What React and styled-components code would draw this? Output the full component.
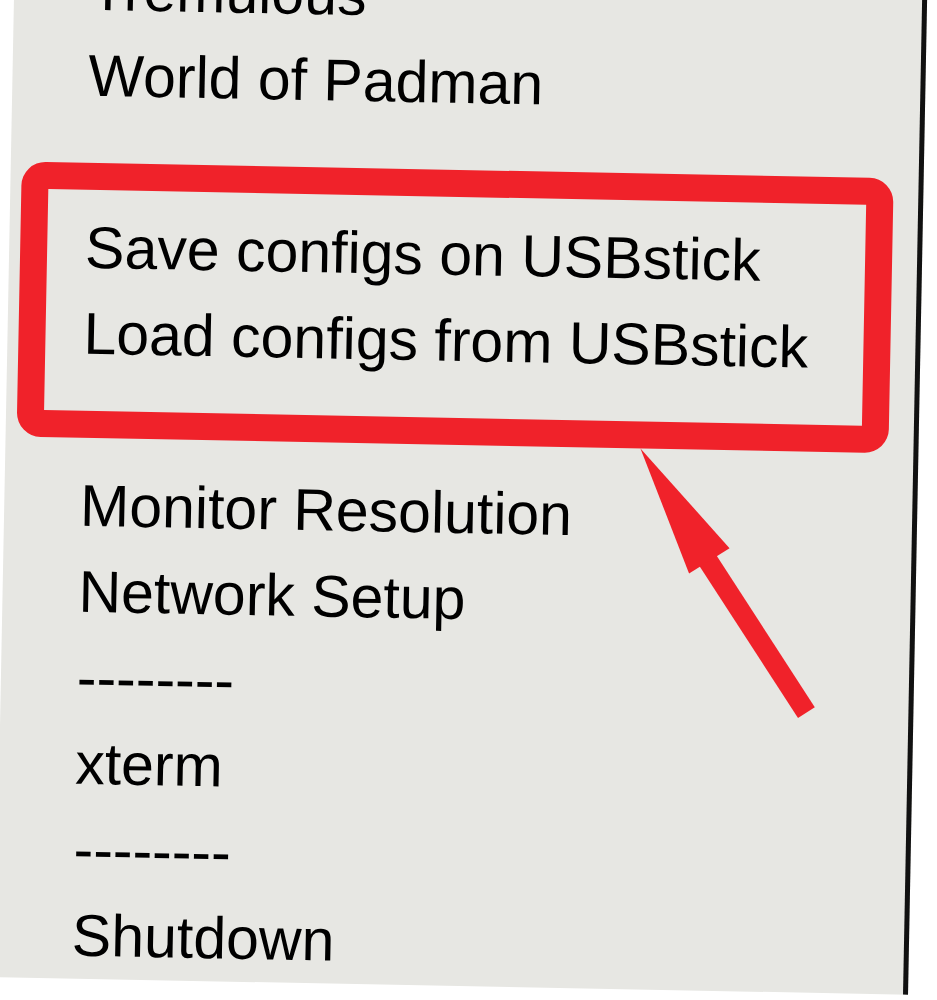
import React from "react";
import styled, { createGlobalStyle } from "styled-components";

const GlobalStyle = createGlobalStyle`
  html, body {
    margin: 0;
    padding: 0;
    background: #ffffff;
    overflow: hidden;
    height: 100%;
  }
  #root {
    height: 100%;
  }
`;

const Page = styled.div`
  width: 937px;
  height: 1000px;
  overflow: hidden;
  background: #ffffff;
`;

const Panel = styled.div`
  box-sizing: border-box;
  width: 913px;
  margin: -46px 0 0 5px;
  background: #e7e7e3;
  border-right: 5px solid #111111;
  display: flex;
  flex-direction: column;
  transform: rotate(1.1deg);
  transform-origin: 50% 50%;
  font-family: "Liberation Sans", Arial, sans-serif;
  font-size: 59px;
  color: #000000;
`;

const Item = styled.div`
  height: 86px;
  line-height: 86px;
  padding-left: 76px;
  white-space: nowrap;
`;

const Spacer = styled.div`
  height: 86px;
`;

const Highlight = styled.div`
  position: relative;
  display: flex;
  flex-direction: column;
`;

const RedBox = styled.div`
  position: absolute;
  top: -42px;
  bottom: -61px;
  left: 11px;
  right: 25px;
  border: 27px solid #f0222a;
  border-radius: 24px;
  pointer-events: none;
`;

const Arrow = styled.svg`
  position: absolute;
  left: 620px;
  top: 228px;
  width: 210px;
  height: 285px;
  overflow: visible;
`;

export default function App() {
  return (
    <Page>
      <GlobalStyle />
      <Panel>
        <Item>Tremulous</Item>
        <Item>World of Padman</Item>
        <Spacer />
        <Highlight>
          <Item>Save configs on USBstick</Item>
          <Item>Load configs from USBstick</Item>
          <RedBox />
          <Arrow viewBox="0 0 210 285">
            <line x1="82" y1="112" x2="186" y2="266" stroke="#f0222a" strokeWidth="20" />
            <polygon points="15,5 106,103 66,129" fill="#f0222a" />
          </Arrow>
        </Highlight>
        <Spacer />
        <Item>Monitor Resolution</Item>
        <Item>Network Setup</Item>
        <Item>--------</Item>
        <Item>xterm</Item>
        <Item>--------</Item>
        <Item>Shutdown</Item>
      </Panel>
    </Page>
  );
}
